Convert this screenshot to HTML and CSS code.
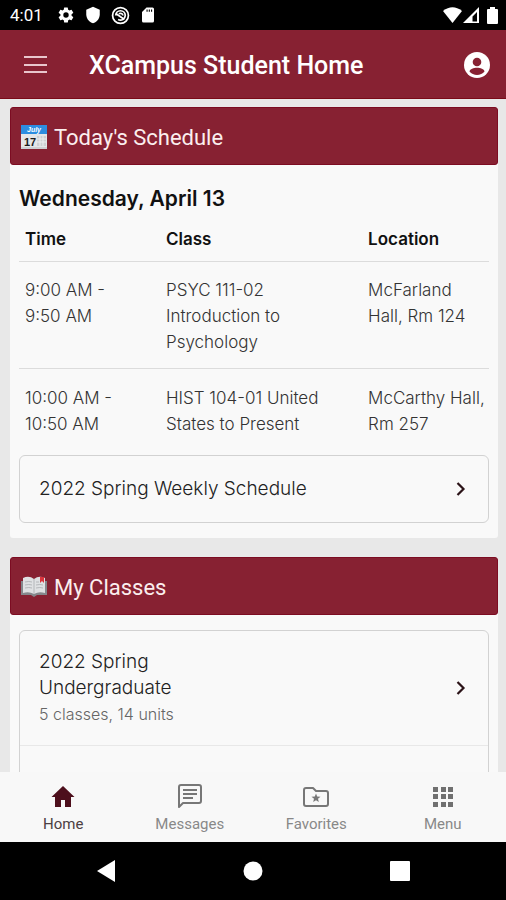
FILE: index.html
```html
<!DOCTYPE html>
<html lang="en">
<head>
  <meta charset="UTF-8" />
  <meta name="viewport" content="width=device-width, initial-scale=1" />
  <title>XCampus Student Home</title>
  <link rel="stylesheet" href="styles.css">
</head>
<body>
  <!-- Device status bar -->
  <div class="status-bar">
    <span class="clock">4:01</span>
    <div class="status-icons">
      <svg width="18" height="18" viewBox="0 0 24 24"><path fill="#fff" d="M19.4 13a7.500 7.500 0 0 0 0-2l2.100-1.600a.5.5 0 0 0 .1-.6l-2-3.500a.5.5 0 0 0-.6-.2l-2.500 1a7.300 7.300 0 0 0-1.700-1L14.400 2.400a.5.500 0 0 0-.5-.4h-4a.5.500 0 0 0-.5.4L9 5.100a7.300 7.300 0 0 0-1.600 1l-2.500-1a.5.5 0 0 0-.6.2l-2 3.500a.5.5 0 0 0 .1.600L4.600 11a7.500 7.500 0 0 0 0 2l-2.200 1.600a.5.5 0 0 0-.1.600l2 3.500c.1.200.4.300.6.200l2.500-1a7.300 7.300 0 0 0 1.700 1l.4 2.700c0 .2.200.4.500.4h4c.2 0 .5-.2.500-.4l.4-2.700a7.300 7.300 0 0 0 1.600-1l2.500 1c.2.100.5 0 .6-.2l2-3.500a.5.5 0 0 0-.1-.6zM12 15.600a3.600 3.600 0 1 1 0-7.200 3.600 3.600 0 0 1 0 7.200z"/></svg>
      <svg width="18" height="18" viewBox="0 0 24 24"><path fill="#fff" d="M12 1L3 5v6c0 5.600 3.800 10.700 9 12 5.200-1.300 9-6.400 9-12V5z"/></svg>
      <svg width="19" height="19" viewBox="0 0 24 24"><g fill="none" stroke="#fff" stroke-width="2.200"><circle cx="12" cy="12" r="10"/><path d="M6 12a6 6 0 0 1 12 0M18 12a6 6 0 0 1-9 5M7 10l10 7"/><path d="M10 10a3 3 0 0 1 5 2"/></g></svg>
      <svg width="18" height="18" viewBox="0 0 24 24"><path fill="#fff" fill-rule="evenodd" d="M18 2h-8L4 8v12a2 2 0 0 0 2 2h12a2 2 0 0 0 2-2V4a2 2 0 0 0-2-2zM10 4.500h1.500v3H10zm3 0h1.500v3H13zm3 0h1.500v3H16z"/></svg>
    </div>
    <div class="signal-icons">
      <svg width="19" height="17" viewBox="0 0 19 17"><path fill="#fff" d="M0 4Q9.500-3.500 19 4L9.500 16z"/></svg>
      <svg width="16" height="17" viewBox="0 0 16 17"><path fill="#fff" fill-rule="evenodd" d="M0 16L16 0v16zM9.500 14.500h4.500V5L9.500 9.500z"/></svg>
      <svg class="battery" width="11" height="17" viewBox="0 0 11 17"><path fill="#fff" d="M3 0h5v2h2a1 1 0 0 1 1 1v13a1 1 0 0 1-1 1H1a1 1 0 0 1-1-1V3a1 1 0 0 1 1-1h2z"/></svg>
    </div>
  </div>

  <header class="app-bar">
    <button class="icon-button" type="button" aria-label="Open menu">
      <svg width="24" height="20" viewBox="0 0 24 20"><path stroke="#e9c6cc" stroke-width="2" d="M0 2h23M0 10h23M0 17h23"/></svg>
    </button>
    <h1>XCampus Student Home</h1>
    <button class="icon-button" type="button" aria-label="Account">
      <svg width="26" height="26" viewBox="0 0 26 26"><circle cx="13" cy="13" r="13" fill="#fff"/><circle cx="13" cy="10" r="4.300" fill="#872132"/><path fill="#872132" d="M5.500 19.500c1-5 14-5 15 0-3.500 4.600-11.500 4.600-15 0z"/></svg>
    </button>
  </header>

  <main>
    <!-- Today's schedule -->
    <section class="card">
      <h2 class="card-title">
        <svg width="26" height="26" viewBox="0 0 26 26"><rect y="1" width="26" height="24" rx="1" fill="#e4e6e8"/><path fill="#2d8de0" d="M0 1h26v9H0z"/><path fill="#cdd0d3" d="M16 12h9v10h-9zM0 23h26v2H0z"/><path stroke="#eceef0" d="M19 12v10M22 12v10M16 15h9M16 18h9"/><text x="13" y="8" text-anchor="middle" font-family="Liberation Sans" font-size="7" font-weight="bold" font-style="italic" fill="#fff">July</text><text x="3" y="22" font-family="Liberation Sans" font-size="11" font-weight="bold" fill="#1b1b1b">17</text></svg>
        Today's Schedule
      </h2>
      <div class="card-body">
        <h3>Wednesday, April 13</h3>
        <table>
          <thead>
            <tr>
              <th class="col-time">Time</th>
              <th class="col-class">Class</th>
              <th>Location</th>
            </tr>
          </thead>
          <tbody>
            <tr>
              <td>9:00 AM -<br>9:50 AM</td>
              <td>PSYC 111-02<br>Introduction to Psychology</td>
              <td>McFarland Hall, Rm 124</td>
            </tr>
            <tr>
              <td>10:00 AM -<br>10:50 AM</td>
              <td>HIST 104-01 United States to Present</td>
              <td>McCarthy Hall, Rm 257</td>
            </tr>
          </tbody>
        </table>
        <div class="link-list">
          <a class="link-item" href="#schedule">
            <span class="link-title">2022 Spring Weekly Schedule</span>
            <svg width="10" height="14" viewBox="0 0 10 14"><path fill="none" stroke="#2b1318" stroke-width="2.200" d="M1.500 1l6 6-6 6"/></svg>
          </a>
        </div>
      </div>
    </section>

    <!-- Classes -->
    <section class="card">
      <h2 class="card-title">
        <svg width="26" height="22" viewBox="0 0 26 22"><path fill="#85888c" d="M0 5h26v14h-10l-3 2-3-2H0z"/><path fill="#dfe1e3" d="M2 2q6-3 11 1 5-4 11-1v15q-6-2-11 1-5-3-11-1z"/><path fill="none" stroke="#b4b7ba" d="M13 3v15M4 6q4-1 7 0M4 9q4-1 7 0M4 12q4-1 7 0M15 9q4-1 7 0M15 12q4-1 7 0M15 6h3"/><path fill="#d8343c" d="M19 1h4v6l-2-2-2 2z"/></svg>
        My Classes
      </h2>
      <div class="card-body">
        <div class="link-list">
          <a class="link-item" href="#spring">
            <span class="link-text">
              <span class="link-title">2022 Spring Undergraduate</span>
              <small>5 classes, 14 units</small>
            </span>
            <svg width="10" height="14" viewBox="0 0 10 14"><path fill="none" stroke="#2b1318" stroke-width="2.200" d="M1.500 1l6 6-6 6"/></svg>
          </a>
          <a class="link-item" href="#more" aria-label="More classes">
            <svg width="10" height="14" viewBox="0 0 10 14"><path fill="none" stroke="#2b1318" stroke-width="2.200" d="M1.500 1l6 6-6 6"/></svg>
          </a>
        </div>
      </div>
    </section>
  </main>

  <nav class="tabs">
    <a class="tab active" href="#home">
      <svg width="26" height="26" viewBox="0 0 26 26"><path fill="#4d0f1c" d="M13 2L1.500 13H5v10h6v-7h4v7h6V13h3.500z"/></svg>
      Home
    </a>
    <a class="tab" href="#messages">
      <svg width="26" height="26" viewBox="0 0 26 26"><path fill="none" stroke="#777" stroke-width="2" stroke-linejoin="round" d="M2 23V3q0-2 2-2h18q2 0 2 2v14q0 2-2 2H6z"/><path stroke="#777" stroke-width="2" d="M6 6h14M6 10h14M6 14h10"/></svg>
      Messages
    </a>
    <a class="tab" href="#favorites">
      <svg width="26" height="26" viewBox="0 0 26 26"><path fill="none" stroke="#777" stroke-width="2" stroke-linejoin="round" d="M3 4h7l3 3h10q2 0 2 2v11q0 2-2 2H3q-2 0-2-2V6q0-2 2-2z"/><path fill="#777" d="M13 9.500l1.200 3 3.300.2-2.500 2.100.8 3.200-2.800-1.800-2.800 1.800.8-3.200-2.500-2.100 3.300-.2z"/></svg>
      Favorites
    </a>
    <a class="tab" href="#menu">
      <svg width="26" height="26" viewBox="0 0 26 26"><path fill="#707070" d="M3 3h5v5H3zM11 3h5v5h-5zM18 3h5v5h-5zM3 10h5v5H3zM11 10h5v5h-5zM18 10h5v5h-5zM3 18h5v5H3zM11 18h5v5h-5zM18 18h5v5h-5z"/></svg>
      Menu
    </a>
  </nav>

  <!-- Device navigation -->
  <div class="system-nav">
    <button type="button" aria-label="Back"><svg width="20" height="22" viewBox="0 0 20 22"><path fill="#fff" d="M19 0v22L1 11z"/></svg></button>
    <button type="button" aria-label="Home screen"><svg width="20" height="20" viewBox="0 0 20 20"><circle cx="10" cy="10" r="9.500" fill="#fff"/></svg></button>
    <button type="button" aria-label="Recent apps"><svg width="20" height="20" viewBox="0 0 20 20"><rect width="20" height="20" rx="1" fill="#fff"/></svg></button>
  </div>
</body>
</html>
```
FILE: styles.css
```css
:root {
  --primary-color: #872132;
  --page-color: #e8e8e8;
  --card-color: #f9f9f9;
  --border-color: #dcdcdc;
}

* {
  box-sizing: border-box;
}

body {
  margin: 0;
  height: 100vh;
  display: flex;
  flex-direction: column;
  background: var(--page-color);
  font-family: Inter, "Liberation Sans", sans-serif;
  font-weight: 300;
  color: #222;
}

h1, h2, h3 {
  margin: 0;
}

button {
  padding: 0;
  border: none;
  background: none;
  cursor: pointer;
}

a {
  color: inherit;
  text-decoration: none;
}

svg {
  display: block;
  flex: none;
}

.status-bar {
  flex: none;
  display: flex;
  align-items: center;
  height: 30px;
  padding: 0 8px 0 10px;
  background: #000;
  color: #fff;
  font: 400 17px Roboto, sans-serif;
}

.status-icons {
  display: flex;
  align-items: center;
  gap: 9px;
  margin-left: 14px;
}

.signal-icons {
  display: flex;
  gap: 1px;
  margin-left: auto;
}

.battery {
  margin-left: 7px;
}

.app-bar {
  flex: none;
  display: flex;
  align-items: center;
  height: 69px;
  padding: 2px 16px 0 24px;
  background: var(--primary-color);
  border-bottom: 1px solid #7a0a18;
}

.app-bar h1 {
  flex: 1;
  margin-left: 41px;
  color: #fff;
  font: 500 25px Roboto, sans-serif;
}

main {
  flex: 1;
  min-height: 0;
  overflow: hidden;
  padding: 8px 8px 0 10px;
}

.card {
  margin-bottom: 19px;
  background: var(--card-color);
  border-radius: 3px;
}

.card-title {
  display: flex;
  align-items: center;
  gap: 7px;
  height: 58px;
  padding: 2px 10px 0;
  background: var(--primary-color);
  border: 1px solid #7c0c22;
  border-radius: 3px;
  color: #fbeeee;
  font: 400 22px Roboto, sans-serif;
}

.card-body {
  padding: 15px 9px;
}

h3 {
  padding-top: 5px;
  color: #111;
  font-size: 21px;
  font-weight: 600;
  line-height: 28px;
}

table {
  width: 100%;
  table-layout: fixed;
  border-collapse: collapse;
  margin-bottom: 8px;
  font-size: 17px;
  line-height: 26px;
}

th, td {
  padding: 15px 0 13px 6px;
  text-align: left;
  vertical-align: top;
}

th {
  padding-top: 13px;
  padding-bottom: 9px;
  color: #111;
  font-weight: 600;
}

td {
  border-top: 1px solid var(--border-color);
  color: #333;
}

tbody tr:last-child td {
  padding-top: 16px;
  padding-bottom: 10px;
}

.col-time {
  width: 30%;
}

.col-class {
  width: 43%;
}

.link-list {
  border: 1px solid #d2d2d2;
  border-radius: 6px;
}

.link-item {
  display: flex;
  align-items: center;
  justify-content: space-between;
  min-height: 66px;
  padding: 18px 22px 18px 19px;
  font-size: 19px;
  line-height: 26px;
}

.link-item + .link-item {
  border-top: 1px solid #e8e8e8;
}

.link-item > svg:only-child {
  margin-left: auto;
}

.link-text {
  max-width: 180px;
}

.link-text .link-title {
  display: block;
}

.link-text small {
  display: block;
  font-size: 16px;
  color: #666;
}

.tabs {
  flex: none;
  display: grid;
  grid-template-columns: repeat(4, 1fr);
  height: 70px;
  background: #f8f8f8;
}

.tab {
  display: flex;
  flex-direction: column;
  align-items: center;
  gap: 5px;
  padding-top: 12px;
  color: #888;
  font: 400 15px Roboto, sans-serif;
}

.tab.active {
  color: #4c4043;
}

.system-nav {
  flex: none;
  display: flex;
  align-items: center;
  justify-content: space-between;
  height: 58px;
  padding: 0 19%;
  background: #000;
}
```
